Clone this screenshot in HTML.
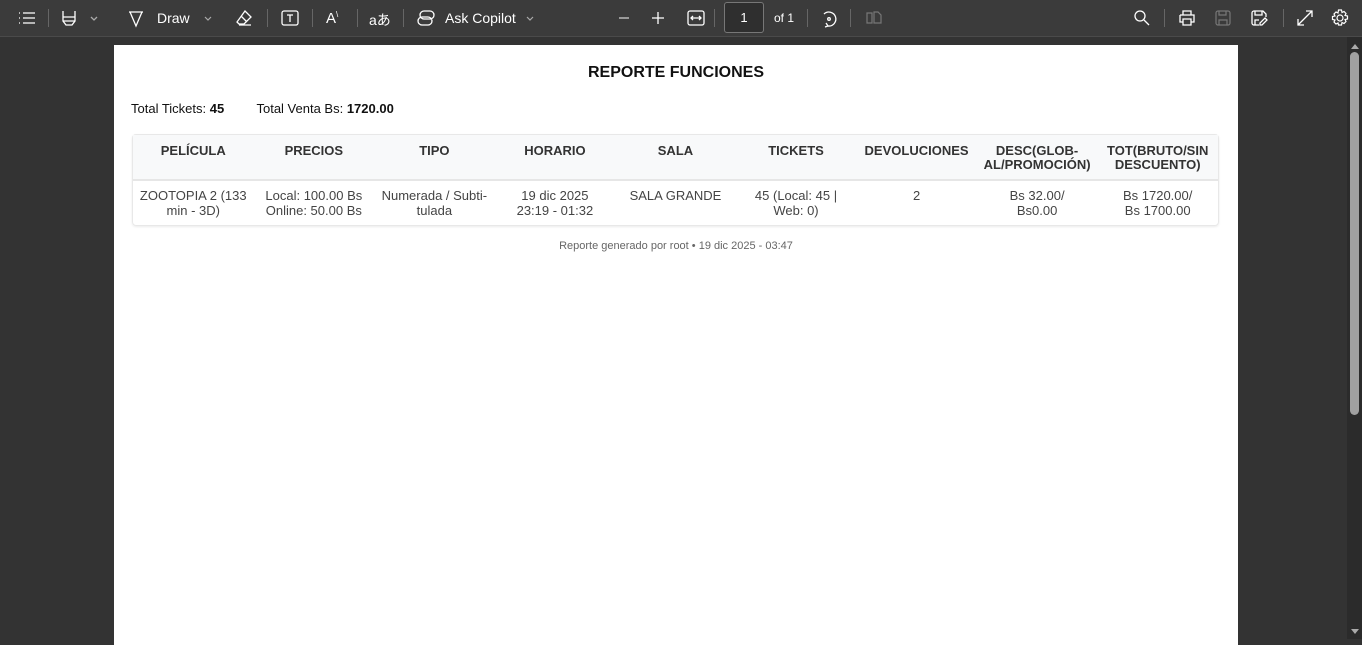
<!DOCTYPE html>
<html><head><meta charset="utf-8"><style>
*{margin:0;padding:0;box-sizing:border-box}
body{width:1362px;height:639px;background:#333;font-family:"Liberation Sans",sans-serif;overflow:hidden;position:relative}
.tb{position:absolute;left:0;top:0;width:1362px;height:37px;background:#3b3b3b;border-bottom:1px solid #4a4a4a;color:#fff;font-size:14px;z-index:2}
.tb span{position:absolute;top:10px}
.sep{position:absolute;top:9px;width:1px;height:18px;background:#666}
.ic{position:absolute;top:8px}
.page{position:absolute;left:114px;top:45px;width:1124px;height:600px;background:#fff}
.track{position:absolute;left:1347px;top:37px;width:15px;height:602px;background:#2b2b2b}
.sb{position:absolute;left:1350px;top:52px;width:9px;height:363px;border-radius:5px;background:#a0a0a0}
h1{position:absolute;top:19px;left:0;width:1124px;text-align:center;font-size:16px;color:#111;font-weight:bold}
.tot{position:absolute;left:17px;top:56px;font-size:13px;color:#111}
table{position:absolute;left:18px;top:89px;width:1087px;border-collapse:separate;border-spacing:0;font-size:13px;color:#333;border:1px solid #e8e8e8;border-radius:4px;table-layout:fixed;box-shadow:0 1px 2px rgba(0,0,0,.08)}
th{background:#f8f9fa;height:46px;vertical-align:top;padding-top:9px;font-weight:bold;color:#333;border-bottom:2px solid #e6e6e6;line-height:14px}
td{height:44px;vertical-align:top;padding-top:7px;text-align:center;line-height:15px;color:#444}
.ft{position:absolute;top:195px;width:1124px;text-align:center;font-size:11px;color:#666}
</style></head><body>
<div class="tb">
<svg class="ic" style="left:17px" width="20" height="20" fill="none" stroke="#fff" stroke-width="1.3"><path d="M2 5h1M6 5h12M2 10h1M6 10h12M2 15h1M6 15h12"/></svg>
<div class="sep" style="left:48px"></div>
<svg class="ic" style="left:60px" width="40" height="20" fill="none" stroke="#fff" stroke-width="1.3"><path d="M3 3v6h12V3M3 9v4l3 4h6l3-4V9M3 13h12"/><path d="M31 9l3 3 3-3" stroke="#aaa"/></svg>
<svg class="ic" style="left:126px" width="20" height="20" fill="none" stroke="#fff" stroke-width="1.3"><path d="M3 4h14M4 4l6 14 6-14"/></svg>
<span style="left:157px">Draw</span>
<svg class="ic" style="left:200px" width="16" height="20" fill="none" stroke="#aaa" stroke-width="1.2"><path d="M5 9l3 3 3-3"/></svg>
<svg class="ic" style="left:234px" width="20" height="20" fill="none" stroke="#fff" stroke-width="1.3"><path d="M11 3l6 6-7 7H5l-2-2z M7 8l6 6M5 17h12"/></svg>
<div class="sep" style="left:267px"></div>
<svg class="ic" style="left:280px" width="20" height="20" fill="none" stroke="#fff" stroke-width="1.3"><rect x="2" y="3" width="16" height="14" rx="2"/><path d="M7 7h6M10 7v7"/></svg>
<div class="sep" style="left:312px"></div>
<span style="left:326px;font-size:15px">A<sup style="font-size:8px">\</sup></span>
<div class="sep" style="left:357px"></div>
<span style="left:369px;font-size:14px;font-family:'Liberation Sans','Noto Sans CJK JP',sans-serif">aあ</span>
<div class="sep" style="left:403px"></div>
<svg class="ic" style="left:416px" width="22" height="20" fill="none" stroke="#fff" stroke-width="1.3"><path d="M8 3h6a4 4 0 0 1 0 8H8a4 4 0 0 1 0-8zM6 9h6a4 4 0 0 1 0 8H6a4 4 0 0 1 0-8z"/></svg>
<span style="left:445px">Ask Copilot</span>
<svg class="ic" style="left:522px" width="16" height="20" fill="none" stroke="#aaa" stroke-width="1.2"><path d="M5 9l3 3 3-3"/></svg>
<svg class="ic" style="left:614px" width="20" height="20" stroke="#ccc" stroke-width="1.3"><path d="M5 10h10"/></svg>
<svg class="ic" style="left:648px" width="20" height="20" stroke="#fff" stroke-width="1.3"><path d="M4 10h12M10 4v12"/></svg>
<svg class="ic" style="left:686px" width="20" height="20" fill="none" stroke="#fff" stroke-width="1.3"><rect x="2" y="3" width="16" height="14" rx="2"/><path d="M6 10h8M7 8l-2 2 2 2M13 8l2 2-2 2"/></svg>
<div class="sep" style="left:714px"></div>
<div style="position:absolute;left:724px;top:2px;width:40px;height:31px;border:1px solid #777;border-radius:3px;background:#2f2f2f;text-align:center;line-height:29px;font-size:13px">1</div>
<span style="left:774px;font-size:12px;top:11px">of 1</span>
<div class="sep" style="left:807px"></div>
<svg class="ic" style="left:818px" width="22" height="22" fill="none" stroke="#fff" stroke-width="1.3"><path d="M6 6a7 7 0 1 1 4 12M8 15l2 3-3 1"/><circle cx="11" cy="11" r="1.3"/></svg>
<div class="sep" style="left:850px"></div>
<svg class="ic" style="left:864px" width="20" height="20" fill="none" stroke="#777" stroke-width="1.2"><path d="M3 5h5v10H3zM10 4h4l3 3v8h-7z"/></svg>
<svg class="ic" style="left:1132px" width="20" height="20" fill="none" stroke="#fff" stroke-width="1.3"><circle cx="8" cy="8" r="5"/><path d="M12 12l5 5"/></svg>
<div class="sep" style="left:1164px"></div>
<svg class="ic" style="left:1177px" width="20" height="20" fill="none" stroke="#fff" stroke-width="1.3"><path d="M6 7V3h8v4M3 7h14v7h-3M6 14H3V7M6 11h8v6H6z"/></svg>
<svg class="ic" style="left:1213px" width="20" height="20" fill="none" stroke="#777" stroke-width="1.2"><rect x="3" y="3" width="14" height="14" rx="2"/><path d="M6 3v4h7V3M6 17v-5h8v5"/></svg>
<svg class="ic" style="left:1249px" width="20" height="20" fill="none" stroke="#fff" stroke-width="1.3"><path d="M10 17H5a2 2 0 0 1-2-2V5a2 2 0 0 1 2-2h9l3 3v3M6 3v4h7V3M6 17v-5h4M16 10l2 2-5 5h-2v-2z"/></svg>
<div class="sep" style="left:1283px"></div>
<svg class="ic" style="left:1295px" width="20" height="20" fill="none" stroke="#fff" stroke-width="1.3"><path d="M3 17L17 3M11 3h6v6M3 11v6h6"/></svg>
<svg class="ic" style="left:1330px" width="20" height="20" fill="none" stroke="#fff" stroke-width="1.2"><circle cx="10" cy="10" r="3"/><path d="M8.5 2h3l.5 2.5 2-1 2 2-1 2L17.5 8v3l-2.5.5 1 2-2 2-2-1-.5 2.5h-3L8 15l-2 1-2-2 1-2L2.5 11.5v-3L5 8 4 6l2-2 2 1z"/></svg>
</div>
<div class="page">
<h1>REPORTE FUNCIONES</h1>
<div class="tot">Total Tickets: <b>45</b> &nbsp; &nbsp; &nbsp; &nbsp; Total Venta Bs: <b>1720.00</b></div>
<table><tr><th>PELÍCULA</th><th>PRECIOS</th><th>TIPO</th><th>HORARIO</th><th>SALA</th><th>TICKETS</th><th>DEVOLUCIONES</th><th>DESC(GLOB-AL/PROMOCIÓN)</th><th>TOT(BRUTO/SIN DESCUENTO)</th></tr>
<tr><td>ZOOTOPIA 2 (133 min - 3D)</td><td>Local: 100.00 Bs<br>Online: 50.00 Bs</td><td>Numerada / Subti-tulada</td><td>19 dic 2025<br>23:19 - 01:32</td><td>SALA GRANDE</td><td>45 (Local: 45 |<br>Web: 0)</td><td>2</td><td>Bs 32.00/<br>Bs0.00</td><td>Bs 1720.00/<br>Bs 1700.00</td></tr></table>
<div class="ft">Reporte generado por root • 19 dic 2025 - 03:47</div>
</div>
<div class="track"></div>
<div class="sb"></div>
<svg style="position:absolute;left:1350px;top:42px" width="10" height="8"><path d="M1 7l4-5 4 5z" fill="#aaa"/></svg>
<svg style="position:absolute;left:1350px;top:628px" width="10" height="8"><path d="M1 1l4 5 4-5z" fill="#aaa"/></svg>
</body></html>
